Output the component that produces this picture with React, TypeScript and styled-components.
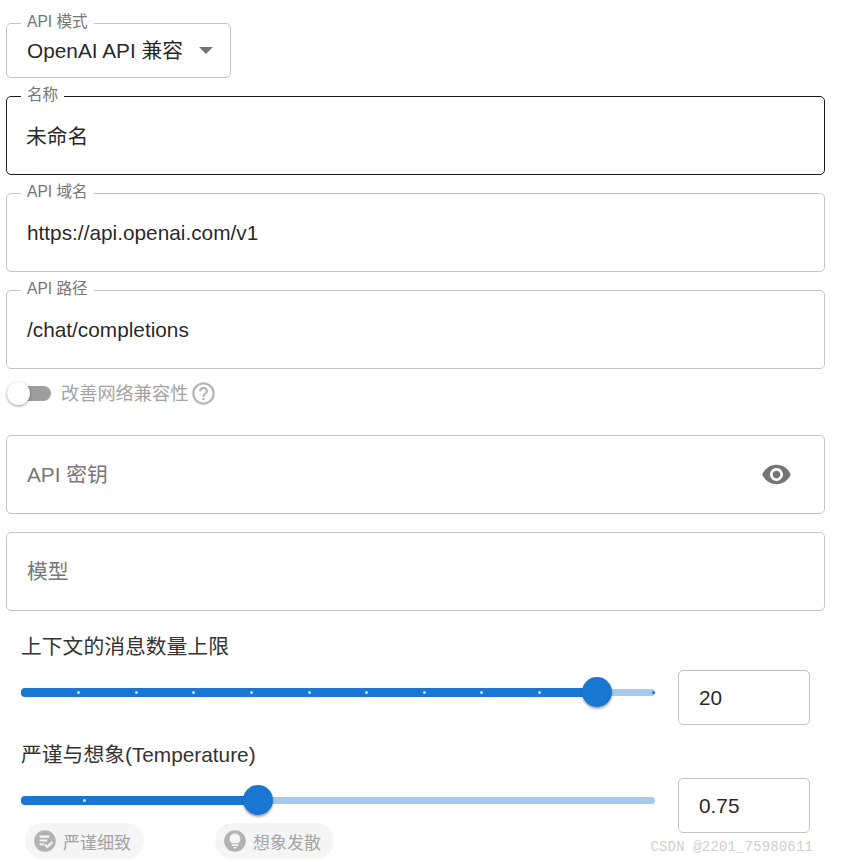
import React from 'react'
import styled, { createGlobalStyle } from 'styled-components'

const FONT = `"Liberation Sans", "Noto Sans CJK SC", sans-serif`

const GlobalStyle = createGlobalStyle`
  html, body {
    margin: 0;
    padding: 0;
    background: #fff;
  }
  body {
    font-family: ${FONT};
    color: rgba(0, 0, 0, 0.87);
  }
`

const Page = styled.div`
  position: relative;
  box-sizing: border-box;
  width: 843px;
  height: 862px;
  padding: 23px 18px 0 6px;
  overflow: hidden;
`

const Fields = styled.div`
  display: flex;
  flex-direction: column;
  gap: 18px;
`

const Outline = styled.div<{ $focused?: boolean; $width?: number; $height?: number }>`
  position: relative;
  box-sizing: border-box;
  display: flex;
  align-items: center;
  justify-content: space-between;
  width: ${({ $width }) => ($width ? `${$width}px` : '100%')};
  height: ${({ $height }) => $height ?? 79}px;
  padding: 0 20px;
  border: 1px solid ${({ $focused }) => ($focused ? '#1a1a1a' : '#c4c4c4')};
  border-radius: 5px;
  font-size: 20.8px;
  line-height: 28px;
`

const FloatingLabel = styled.span`
  position: absolute;
  top: -12px;
  left: 14px;
  padding: 0 6px;
  background: #fff;
  font-size: 15.6px;
  line-height: 19px;
  color: #757575;
  white-space: nowrap;
`

const Placeholder = styled.span`
  color: #777;
`

const NameValue = styled.span`
  margin-top: 3px;
  margin-left: -1px;
`

const Caret = styled.span`
  flex: none;
  width: 0;
  height: 0;
  margin-right: -3px;
  border-left: 7px solid transparent;
  border-right: 7px solid transparent;
  border-top: 7px solid #757575;
`

const SelectValue = styled.span`
  white-space: nowrap;
`

const IconButton = styled.span`
  display: flex;
  margin-right: 12px;
  color: #757575;
`

const SwitchRow = styled.div`
  display: flex;
  align-items: center;
  height: 30px;
  margin: 9px 0 27px;
  color: #a3a3a3;
  font-size: 18.2px;
`

const SwitchText = styled.span`
  margin-top: -3px;
`

const SwitchTrack = styled.span`
  position: relative;
  display: block;
  width: 44px;
  height: 15px;
  margin-right: 10px;
  margin-left: 1px;
  background: #9e9e9e;
  border-radius: 8px;
`

const SwitchThumb = styled.span`
  position: absolute;
  top: -4px;
  left: 0;
  width: 23px;
  height: 23px;
  border-radius: 50%;
  background: #fff;
  box-shadow: 0 1px 3px rgba(0, 0, 0, 0.4);
`

const HelpIcon = styled.span`
  display: flex;
  margin-left: 2px;
  color: #b5b5b5;
`

const SliderBlock = styled.div`
  margin-top: 23px;
  padding-left: 15px;
`

const SliderTitle = styled.div`
  font-size: 20.8px;
  line-height: 26px;
  color: #333;
  white-space: nowrap;
`

const SliderRow = styled.div`
  display: flex;
  align-items: center;
  gap: 23px;
  height: 55px;
  margin-top: 10px;
`

const Track = styled.div`
  position: relative;
  width: 634px;
  height: 7px;
  margin-top: -10px;
  border-radius: 4px;
  background: #a5c9ef;
`

const TrackFill = styled.div`
  position: absolute;
  top: -1px;
  bottom: -1px;
  left: 0;
  border-radius: 4px;
  background: #1976d2;
`

const Mark = styled.span`
  position: absolute;
  top: 2px;
  width: 3px;
  height: 3px;
  margin-left: -1px;
  border-radius: 50%;
  background: #cfe2f6;
`

const EndMark = styled(Mark)`
  background: #1976d2;
`

const Thumb = styled.span`
  position: absolute;
  top: -12px;
  width: 30px;
  height: 30px;
  margin-left: -15px;
  border-radius: 50%;
  background: #1976d2;
  box-shadow: 0 2px 3px -1px rgba(0, 0, 0, 0.35), 0 2px 3px rgba(0, 0, 0, 0.16);
`

const SecondBlock = styled.div`
  margin-top: 17px;
`

const SecondTrack = styled(Track)`
  margin-top: -10px;
`

const Chips = styled.div`
  display: flex;
  gap: 71px;
  margin: -10px 0 0 4px;
`

const Chip = styled.span`
  display: inline-flex;
  align-items: center;
  gap: 5px;
  height: 36px;
  padding: 0 13px 0 7px;
  border-radius: 18px;
  background: #f5f5f5;
  color: #a3a3a3;
  font-size: 17px;
  white-space: nowrap;
`

const ChipIcon = styled.span`
  display: flex;
  color: #b2b2b2;
`

const Watermark = styled.span`
  position: absolute;
  right: 30px;
  bottom: 7px;
  font-family: "Liberation Mono", monospace;
  font-size: 14px;
  line-height: 16px;
  letter-spacing: 0.15px;
  color: #cfcfcf;
  white-space: nowrap;
`

const Icon = ({ d, size }: { d: string; size: number }) => (
  <svg width={size} height={size} viewBox="0 0 24 24" fill="currentColor">
    <path d={d} />
  </svg>
)

const EYE =
  'M12 4.5C7 4.5 2.73 7.61 1 12c1.73 4.39 6 7.5 11 7.5s9.27-3.11 11-7.5c-1.73-4.39-6-7.5-11-7.5zM12 17c-2.76 0-5-2.24-5-5s2.24-5 5-5 5 2.24 5 5-2.24 5-5 5zm0-8c-1.66 0-3 1.34-3 3s1.34 3 3 3 3-1.34 3-3-1.34-3-3-3z'
const HELP =
  'M11 18h2v-2h-2v2zm1-16C6.48 2 2 6.48 2 12s4.48 10 10 10 10-4.48 10-10S17.52 2 12 2zm0 18c-4.41 0-8-3.59-8-8s3.59-8 8-8 8 3.59 8 8-3.59 8-8 8zm0-14c-2.21 0-4 1.79-4 4h2c0-1.1.9-2 2-2s2 .9 2 2c0 2-3 1.75-3 5h2c0-2.25 3-2.5 3-5 0-2.21-1.79-4-4-4z'
const CHECK_CIRCLE =
  'M12 2C6.48 2 2 6.48 2 12s4.48 10 10 10 10-4.48 10-10S17.52 2 12 2zM7 7h9v2H7V7zm0 3.5h7v2H7v-2zM11 16H7v-2h4v2zm3.2 3-3.1-3.1 1.4-1.4 1.7 1.7 4-4 1.4 1.4-5.4 5.4z'
const BULB_CIRCLE =
  'M12 2C6.48 2 2 6.48 2 12s4.48 10 10 10 10-4.48 10-10S17.52 2 12 2zm0 17c-.83 0-1.5-.67-1.5-1.5h3c0 .83-.67 1.5-1.5 1.5zm3-2.5H9V15h6v1.5zm-.03-2.5H9.03C7.8 13.09 7 11.64 7 10c0-2.76 2.24-5 5-5s5 2.24 5 5c0 1.64-.8 3.09-2.03 4z'

const percent = (px: number) => `${(px / 634) * 100}%`

export default function App() {
  const marks = [57, 115, 172, 230, 288, 345, 403, 460, 518]

  return (
    <Page>
      <GlobalStyle />
      <Fields>
        <Outline $width={225} $height={55}>
          <FloatingLabel>API 模式</FloatingLabel>
          <SelectValue>OpenAI API 兼容</SelectValue>
          <Caret />
        </Outline>
        <Outline $focused>
          <FloatingLabel>名称</FloatingLabel>
          <NameValue>未命名</NameValue>
        </Outline>
        <Outline>
          <FloatingLabel>API 域名</FloatingLabel>
          https://api.openai.com/v1
        </Outline>
        <Outline>
          <FloatingLabel>API 路径</FloatingLabel>
          /chat/completions
        </Outline>
      </Fields>

      <SwitchRow>
        <SwitchTrack>
          <SwitchThumb />
        </SwitchTrack>
        <SwitchText>改善网络兼容性</SwitchText>
        <HelpIcon>
          <Icon d={HELP} size={27} />
        </HelpIcon>
      </SwitchRow>

      <Fields>
        <Outline>
          <Placeholder>API 密钥</Placeholder>
          <IconButton>
            <Icon d={EYE} size={31} />
          </IconButton>
        </Outline>
        <Outline>
          <Placeholder>模型</Placeholder>
        </Outline>
      </Fields>

      <SliderBlock>
        <SliderTitle>上下文的消息数量上限</SliderTitle>
        <SliderRow>
          <Track>
            <TrackFill style={{ width: percent(576) }} />
            {marks.map((x) => (
              <Mark key={x} style={{ left: percent(x) }} />
            ))}
            <EndMark style={{ left: percent(632) }} />
            <Thumb style={{ left: percent(576) }} />
          </Track>
          <Outline $width={132} $height={55}>
            20
          </Outline>
        </SliderRow>

        <SecondBlock>
          <SliderTitle>严谨与想象(Temperature)</SliderTitle>
          <SliderRow>
            <SecondTrack>
              <TrackFill style={{ width: percent(237) }} />
              <Mark style={{ left: percent(63) }} />
              <Thumb style={{ left: percent(237) }} />
            </SecondTrack>
            <Outline $width={132} $height={55}>
              0.75
            </Outline>
          </SliderRow>
        </SecondBlock>

        <Chips>
          <Chip>
            <ChipIcon>
              <Icon d={CHECK_CIRCLE} size={26} />
            </ChipIcon>
            严谨细致
          </Chip>
          <Chip>
            <ChipIcon>
              <Icon d={BULB_CIRCLE} size={26} />
            </ChipIcon>
            想象发散
          </Chip>
        </Chips>
      </SliderBlock>

      <Watermark>CSDN @2201_75980611</Watermark>
    </Page>
  )
}
